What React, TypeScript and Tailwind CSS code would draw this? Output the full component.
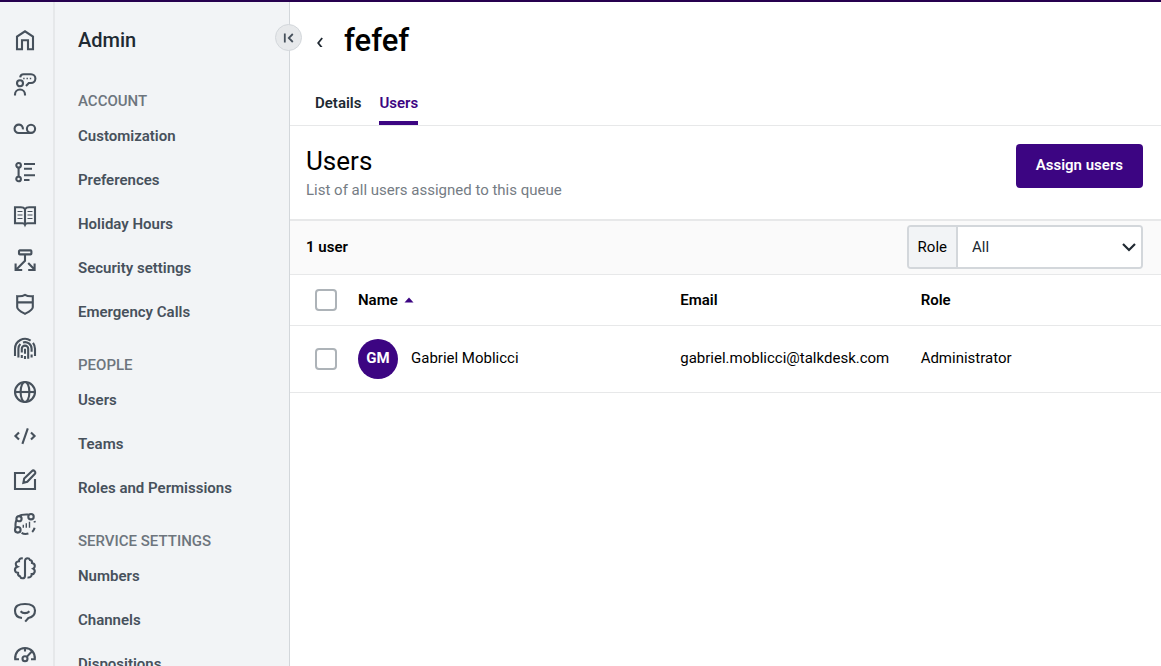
import React from 'react';

const railIcons = [
  {
    name: 'Home',
    icon: <path d="M4 21.3V8.6l8-5.3 8 5.3v12.7h-5v-9H9v9z" />,
  },
  {
    name: 'Agents',
    icon: (
      <>
        <circle cx="7" cy="11.3" r="3" />
        <path d="M2 23.4v-.9a5 5 0 0 1 10 0v.9" />
        <path d="M7.2 5.4C7.4 3.4 8.6 2.2 10.6 2.2H18a4.4 4.4 0 0 1 0 8.8h-2.2L13 14" />
        <path d="M10.2 6.5h1.4M13.5 6.5h1.4M16.8 6.5h1.4" strokeWidth="1.5" />
      </>
    ),
  },
  {
    name: 'Voicemail',
    icon: (
      <>
        <path d="M9.9 13.4A4.2 4.2 0 1 0 5.8 17h12.4" />
        <circle cx="18" cy="12.8" r="4.1" />
      </>
    ),
  },
  {
    name: 'Routing',
    icon: (
      <>
        <circle cx="5.6" cy="5.3" r="2.3" />
        <circle cx="5.6" cy="19" r="2.3" />
        <path d="M5.6 7.6v9.1M11 4h11M11 8.7h8M11 15.3h11M11 20h5.5" />
      </>
    ),
  },
  {
    name: 'Contacts',
    icon: (
      <>
        <path d="M12 5.2c-1-1.4-2.6-1.9-4.2-1.9H2v15.9h7.5c1.3 0 2.1.5 2.5 1.5.4-1 1.2-1.5 2.5-1.5H22V3.3h-5.8c-1.6 0-3.2.5-4.2 1.9zV21.5" />
        <path d="M4.5 7.5h5M4.5 11h5M4.5 14.5h5M14.5 7.5h5M14.5 11h5M14.5 14.5h5" strokeWidth="1.1" />
      </>
    ),
  },
  {
    name: 'Flows',
    icon: (
      <>
        <rect x="6" y="2.4" width="12.4" height="4" rx="0.8" />
        <path d="M12 6.4v6.4L3.6 21.2M15.2 15l5.8 6M2.6 15.4v6.6h6.6M21.6 15.4v6.6h-6.4" />
      </>
    ),
  },
  {
    name: 'Security',
    icon: (
      <path d="M4.2 4.2c3 .3 5.8-.1 7.8-1.3 2 1.2 4.8 1.6 7.8 1.3v11c0 2.7-4.6 4.9-7.8 6.6-3.2-1.7-7.8-3.9-7.8-6.6zM4.2 10.4h15.6" />
    ),
  },
  {
    name: 'Identity',
    icon: (
      <>
        <path d="M2 20v-7.2A10 10 0 0 1 17.6 4.6M20 6.8a10 10 0 0 1 2 6V20" />
        <path d="M5.4 21.5v-8.7a6.6 6.6 0 0 1 2-4.7M10 6.5a6.6 6.6 0 0 1 8.6 6.3v3M18.6 18.5v3" />
        <path d="M8.8 16.5v-3.7a3.2 3.2 0 0 1 6.4 0v10M8.8 19v3M12 12.8v5M12 20v3" />
      </>
    ),
  },
  {
    name: 'Languages',
    icon: (
      <>
        <circle cx="12" cy="12" r="10" />
        <ellipse cx="12" cy="12" rx="4.4" ry="10" />
        <path d="M2 12h20" />
      </>
    ),
  },
  {
    name: 'Developers',
    icon: <path d="M6 8.4 2.4 12 6 15.6M18 8.4l3.6 3.6-3.6 3.6M14.8 4.4 9.4 19.8" />,
  },
  {
    name: 'Editor',
    icon: (
      <>
        <path d="M12 5H2v16h20V11" />
        <path d="m10.4 14.8.8-4.2 7.6-7.4a2 2 0 0 1 2.9 2.9l-7.4 7.6z" />
      </>
    ),
  },
  {
    name: 'Processes',
    icon: (
      <>
        <circle cx="18" cy="4.7" r="2.7" />
        <circle cx="6" cy="6.7" r="2.6" />
        <circle cx="4.8" cy="17.8" r="2.8" />
        <path d="M6.5 4c1.2-1.5 3-1.8 9-1.5M3.6 8.2C2.4 10 2.2 12 2.6 16" />
        <path d="M10.3 12.8v3M13.3 11.3v4.5M16.5 9.8v6" strokeWidth="1.4" />
        <path d="M8.6 20.8c2.2 1.4 4.4 1.4 6.8.7M19.2 20c1.2-1.2 2-2.5 2.4-4.2M21.5 9l.4 1.6" />
      </>
    ),
  },
  {
    name: 'Intelligence',
    icon: (
      <path d="M9.8 2.4C7.5 1.8 5.8 3.2 6 5.2 3.6 5.2 2.2 7 3 9.2c.3.8.8 1.2 1.4 1.5C2.4 11.4 1.7 12.8 2 14.4c.3 1.5 1.5 2.4 3 2.5-.2 1.6.5 3 2 3.4.4 1.2 1.3 2 2.5 2 1.6 0 2.5-1.1 2.5-2.6V5c0-1.7 1-2.8 2.5-2.8 1.2 0 2.1.7 2.5 1.8 1.5.3 2.2 1.5 2 3 1.7.3 2.8 1.5 2.8 3.1 0 1.2-.6 2.1-1.6 2.6 1.4.8 1.8 2 1.4 3.4-.4 1.3-1.5 2.1-2.9 2 .2 2.2-1.7 3.8-4.2 3.4" />
    ),
  },
  {
    name: 'Feedback',
    icon: (
      <path d="M9 18C4.7 17.6 2 14.8 2 10.8 2 6.2 5.2 4 12 4s10 2.2 10 6.6c0 4.4-3 6.8-6.6 7.4L12.2 21.6M7.6 11.2c2.2 2.6 6.6 2.6 8.8 0" />
    ),
  },
  {
    name: 'Performance',
    icon: (
      <>
        <path d="M6 15.2H2.2C1.6 9 5.8 4 12 4s10.4 5 9.8 11.2H18M12 4v3.6M14 12.6 19 7.2" />
        <circle cx="12" cy="14.7" r="2.5" />
      </>
    ),
  },
];

const sections = [
  {
    title: 'ACCOUNT',
    items: ['Customization', 'Preferences', 'Holiday Hours', 'Security settings', 'Emergency Calls'],
  },
  { title: 'PEOPLE', items: ['Users', 'Teams', 'Roles and Permissions'] },
  { title: 'SERVICE SETTINGS', items: ['Numbers', 'Channels', 'Dispositions'] },
];

const users = [
  {
    initials: 'GM',
    name: 'Gabriel Moblicci',
    email: 'gabriel.moblicci@talkdesk.com',
    role: 'Administrator',
  },
];

const Checkbox = ({ label }: { label: string }) => (
  <input
    type="checkbox"
    aria-label={label}
    className="block size-[22px] appearance-none rounded border-2 border-[#adb3b8] bg-white checked:bg-[#3c0582]"
  />
);

const Rail = () => (
  <nav
    aria-label="Applications"
    className="w-[55px] shrink-0 overflow-hidden border-r-2 border-[#e6e8ea] bg-[#f2f4f6] pt-4"
  >
    {railIcons.map(({ name, icon }) => (
      <a key={name} href="#" aria-label={name} className="flex h-11 items-center pl-[13px] text-[#47515c]">
        <svg
          viewBox="0 0 24 24"
          className="size-6"
          fill="none"
          stroke="currentColor"
          strokeWidth="2.1"
        >
          {icon}
        </svg>
      </a>
    ))}
  </nav>
);

const Sidebar = () => (
  <aside className="relative w-[235px] shrink-0 border-r border-[#d3d7db] bg-[#f2f4f6]">
    <div className="h-full overflow-hidden pl-[23px] pt-6">
      <h2 className="mb-[34px] text-xl leading-7 font-medium text-[#202932]">Admin</h2>
      <div className="flex flex-col gap-[18px]">
        {sections.map((section) => (
          <section key={section.title}>
            <h3 className="leading-[26px] font-medium text-[#6d757d]">{section.title}</h3>
            <ul>
              {section.items.map((item) => (
                <li key={item}>
                  <a href="#" className="flex h-11 items-center font-semibold text-[#47515c]">
                    {item}
                  </a>
                </li>
              ))}
            </ul>
          </section>
        ))}
      </div>
    </div>
    <button
      aria-label="Collapse menu"
      className="absolute -right-[13px] top-[22px] z-10 flex size-[27px] items-center justify-center rounded-full border border-[#d3d7db] bg-[#e7e9eb] text-[#47515c]"
    >
      <svg viewBox="0 0 12 12" className="size-3" fill="none" stroke="currentColor" strokeWidth="1.8">
        <path d="M1.8 1.4v9.2M9.8 2 5.8 6l4 4" />
      </svg>
    </button>
  </aside>
);

const App = () => {
  return (
    <div className="flex h-screen flex-col overflow-hidden border-t-2 border-[#26004f] bg-white font-['Roboto',sans-serif] text-[15px] text-black">
      <div className="flex min-h-0 flex-1">
        <Rail />
        <Sidebar />
        <main className="min-w-0 flex-1 overflow-hidden">
          <header className="border-b border-[#e7e8e9]">
            <div className="flex items-center pt-[19px] pl-6">
              <button aria-label="Back" className="flex size-3 items-center justify-center text-[#202932]">
                <svg viewBox="0 0 12 12" className="size-3" fill="none" stroke="currentColor" strokeWidth="1.8">
                  <path d="M8.2 3 4.2 8l4 5" />
                </svg>
              </button>
              <h1 className="pl-[18px] text-[31px] leading-10 font-medium">fefef</h1>
            </div>
            <nav className="mt-[22px] flex gap-[18px] pl-[25px] font-semibold text-[#202932]">
              <a href="#" className="border-b-4 border-transparent pt-2 pb-1.5 leading-6">
                Details
              </a>
              <a href="#" className="border-b-4 border-[#3c0582] pt-2 pb-1.5 leading-6 text-[#3c0582]">
                Users
              </a>
            </nav>
          </header>

          <section className="flex items-start justify-between pt-[18px] pr-[18px] pb-[17px] pl-4">
            <div>
              <h2 className="text-[26px] leading-[34px]">Users</h2>
              <p className="leading-6 text-[#757c84]">List of all users assigned to this queue</p>
            </div>
            <button className="h-11 rounded bg-[#3c0582] px-5 pb-0.5 font-semibold text-white">Assign users</button>
          </section>

          <div className="flex items-center justify-between border-t-2 border-b border-[#e7e8e9] bg-[#fafafa] pt-1 pr-[18px] pb-[5px] pl-4">
            <span className="font-semibold">1 user</span>
            <div className="flex h-11 overflow-hidden rounded border-2 border-[#d3d7db] bg-white">
              <label
                htmlFor="role"
                className="flex items-center border-r-2 border-[#d3d7db] bg-[#f2f4f6] px-[9px]"
              >
                Role
              </label>
              <div className="relative w-[183px]">
                <select id="role" className="h-full w-full appearance-none bg-white pl-3.5 text-[#202932]">
                  <option>All</option>
                </select>
                <svg
                  viewBox="0 0 16 16"
                  className="pointer-events-none absolute top-3 right-1 size-4"
                  fill="none"
                  stroke="#202932"
                  strokeWidth="2.2"
                >
                  <path d="m2 5 6 6 6-6" />
                </svg>
              </div>
            </div>
          </div>

          <table className="w-full table-fixed text-left">
            <thead>
              <tr className="h-[50px] border-b border-[#e7e8e9]">
                <th className="w-[68px] pl-[25px]">
                  <Checkbox label="Select all users" />
                </th>
                <th className="w-[37%] font-semibold">
                  <button className="flex items-center gap-1.5">
                    Name
                    <svg viewBox="0 0 10 6" className="h-1.5 w-2.5" fill="#3c0582">
                      <path d="M5 .5 9.5 5.5h-9z" />
                    </svg>
                  </button>
                </th>
                <th className="font-semibold">Email</th>
                <th className="font-semibold">Role</th>
              </tr>
            </thead>
            <tbody>
              {users.map((user) => (
                <tr key={user.email} className="h-[67px] border-b border-[#e7e8e9]">
                  <td className="pl-[25px]">
                    <Checkbox label={`Select ${user.name}`} />
                  </td>
                  <td>
                    <div className="flex items-center gap-[13px]">
                      <span className="flex size-10 items-center justify-center rounded-full bg-[#3c0582] font-bold text-white">
                        {user.initials}
                      </span>
                      {user.name}
                    </div>
                  </td>
                  <td>{user.email}</td>
                  <td>{user.role}</td>
                </tr>
              ))}
            </tbody>
          </table>
        </main>
      </div>
    </div>
  );
};

export default App;
